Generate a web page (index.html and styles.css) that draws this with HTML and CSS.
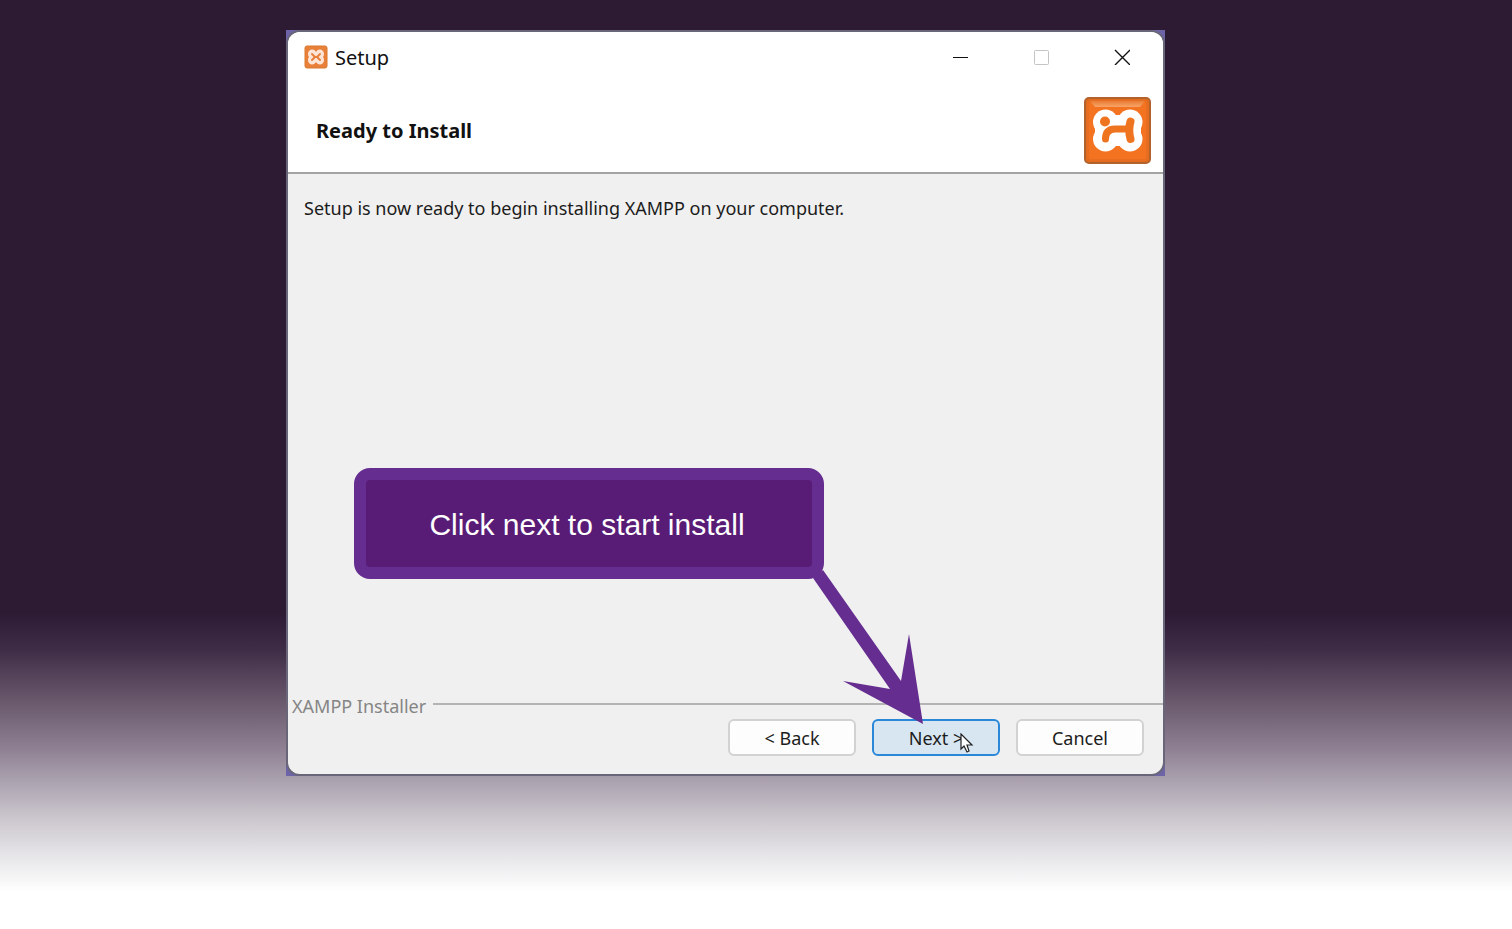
FILE: index.html
```html
<!DOCTYPE html>
<html lang="en">
<head>
  <meta charset="UTF-8">
  <meta name="viewport" content="width=device-width, initial-scale=1.0">
  <title>Setup</title>
  <link rel="stylesheet" href="styles.css">
</head>
<body>
  <main class="frame">
    <div class="window">
      <header class="title-bar">
        <svg class="title-icon" width="24" height="24" viewBox="0 0 24 24" aria-hidden="true">
          <rect x="1" y="1" width="22" height="22" rx="2" fill="#e8803a" stroke="#d9782f"/>
          <path d="M12 7C10 3 4 4 4 9Q4 11 5 12Q4 13 4 15C4 20 10 21 12 17C14 21 20 20 20 15Q20 13 19 12Q20 11 20 9C20 4 14 3 12 7Z" fill="#fde6d7"/>
          <path d="M8 9L11 12L8 15M16 9L13 12L16 15M10 12H14" fill="none" stroke="#e8803a" stroke-width="2" stroke-linecap="round"/>
        </svg>
        <span class="title">Setup</span>
        <div class="controls">
          <button class="control" type="button" aria-label="Minimize">
            <svg width="16" height="16" viewBox="0 0 16 16"><path d="M1 8.5H16" stroke="#111"/></svg>
          </button>
          <button class="control" type="button" aria-label="Maximize" disabled>
            <svg width="16" height="16" viewBox="0 0 16 16"><rect x="1.5" y="1.5" width="14" height="14" rx="1" fill="none" stroke="#c4c4c4"/></svg>
          </button>
          <button class="control" type="button" aria-label="Close">
            <svg width="16" height="16" viewBox="0 0 16 16"><path d="M1 1L16 16M16 1L1 16" stroke="#111" stroke-width="1.4"/></svg>
          </button>
        </div>
      </header>

      <div class="banner">
        <h1>Ready to Install</h1>
        <svg class="logo" width="67" height="67" viewBox="0 0 67 67" role="img" aria-label="XAMPP">
          <defs>
            <linearGradient id="shine" x1="0" y1="0" x2="0" y2="1">
              <stop offset="0" stop-color="#e87c35"/>
              <stop offset="1" stop-color="#f9a468"/>
            </linearGradient>
          </defs>
          <rect x="1" y="1" width="65" height="65" rx="4" fill="#e06c20" stroke="#b4622c" stroke-width="2"/>
          <rect x="4" y="4" width="59" height="59" rx="3" fill="#f37321" stroke="#e76d20" stroke-width="2"/>
          <path d="M6 4H61L56 10H11Z" fill="url(#shine)"/>
          <g fill="#fff">
            <circle cx="21.5" cy="25" r="12.5"/>
            <circle cx="46" cy="25" r="12.5"/>
            <circle cx="21.5" cy="42" r="12.5"/>
            <circle cx="46" cy="42" r="12.5"/>
            <rect x="11" y="25" width="46" height="17"/>
            <rect x="29" y="18" width="9" height="31"/>
          </g>
          <circle cx="21" cy="24.5" r="5" fill="#ef7420"/>
          <g fill="none" stroke="#ef7420" stroke-linecap="round">
            <path d="M21.5 42C21.5 35 25 32 31 32H45" stroke-width="7"/>
            <path d="M46.5 24.5Q44 33 46.5 42" stroke-width="8"/>
          </g>
        </svg>
      </div>

      <section class="content">
        <p>Setup is now ready to begin installing XAMPP on your computer.</p>
      </section>

      <footer class="footer">
        <div class="divider"><span>XAMPP Installer</span></div>
        <div class="buttons">
          <button class="btn" type="button">&lt; Back</button>
          <button class="btn btn-active" type="button">Next &gt;</button>
          <button class="btn" type="button">Cancel</button>
        </div>
      </footer>
    </div>

    <div class="callout">Click next to start install</div>
    <svg class="arrow" width="112" height="160" viewBox="0 0 112 160" aria-hidden="true">
      <path d="M0 13L10 5L88 116L96 69L110 159L30 116L77 124Z" fill="#652d90"/>
    </svg>
    <svg class="cursor" width="14" height="20" viewBox="0 0 14 20" aria-hidden="true">
      <path d="M1 1V16L4 13L7 19L9 18L7 12H12Z" fill="#fff" stroke="#222" stroke-width="1.2"/>
    </svg>
  </main>
</body>
</html>
```

FILE: styles.css
```css
* {
  box-sizing: border-box;
}

body {
  margin: 0;
  min-height: 100vh;
  padding: 30px 347px 30px 286px;
  font-family: "Noto Sans", sans-serif;
  font-size: 18px;
  color: #1c1c1c;
  background: linear-gradient(#2d1a33 66%, #3f2d47 70%, #665569 75%, #8a7b8e 80%, #aaa1ae 84%, #cbc6cd 88%, #e5e4e7 92%, #ffffff 96%);
}

.frame {
  position: relative;
  padding: 2px;
  background-color: #6c64a6;
}

.window {
  display: flex;
  flex-direction: column;
  overflow: hidden;
  border-radius: 12px;
  background-color: #f0f0f0;
  box-shadow: 0 0 0 2px #686678;
}

.title-bar {
  display: flex;
  align-items: center;
  height: 50px;
  padding: 0 1px 0 16px;
  background-color: #fff;
}

.title {
  margin-left: 7px;
  padding-top: 2px;
  font-size: 20px;
  line-height: 28px;
  color: #111;
}

.controls {
  display: flex;
  margin-left: auto;
}

.control {
  display: flex;
  align-items: center;
  justify-content: center;
  width: 81px;
  height: 50px;
  padding: 0;
  border: none;
  background: none;
}

.banner {
  display: flex;
  align-items: center;
  justify-content: space-between;
  height: 92px;
  padding: 6px 12px 0 28px;
  background-color: #fff;
  border-bottom: 2px solid #a3a3a3;
}

h1 {
  margin: 0;
  padding-top: 2px;
  font-size: 20px;
  line-height: 28px;
  color: #111;
}

.content {
  min-height: 519px;
  padding: 20px 16px;
}

.content p {
  margin: 0;
  line-height: 28px;
}

.divider {
  display: flex;
  align-items: center;
  gap: 7px;
  padding-left: 4px;
  line-height: 26px;
  color: #858585;
}

.divider::after {
  content: "";
  flex: 1;
  height: 2px;
  margin-bottom: 4px;
  background-color: #b4b4b4;
}

.buttons {
  display: flex;
  justify-content: flex-end;
  gap: 16px;
  padding: 0 19px 18px;
}

.btn {
  width: 128px;
  height: 37px;
  padding: 0;
  border: 2px solid #d2d2d2;
  border-radius: 6px;
  background-color: #fdfdfd;
  font-family: inherit;
  font-size: 18px;
  color: #1c1c1c;
}

.btn-active {
  border-color: #2b88d8;
  background-color: #d8e6f2;
}

.callout {
  position: absolute;
  top: 438px;
  left: 68px;
  display: flex;
  align-items: center;
  justify-content: center;
  width: 470px;
  height: 111px;
  padding: 2px 4px 0 0;
  border: 12px solid #652d90;
  border-radius: 16px;
  background-color: #591c76;
  font-family: "Liberation Sans", Arial, sans-serif;
  font-size: 30px;
  color: #fff;
}

.arrow {
  position: absolute;
  top: 535px;
  left: 527px;
}

.cursor {
  position: absolute;
  top: 703px;
  left: 674px;
}
```
